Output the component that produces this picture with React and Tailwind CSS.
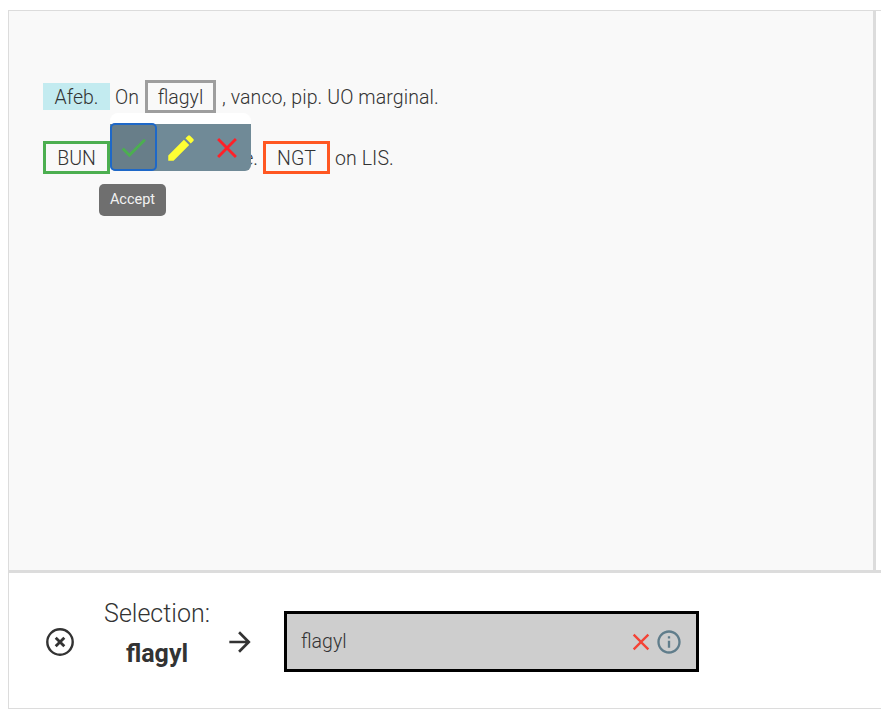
import { MdCheck, MdEdit, MdClose, MdArrowForward, MdInfoOutline } from 'react-icons/md';

function ClearIcon() {
  return (
    <svg width="28" height="28" viewBox="0 0 28 28" fill="none" stroke="#333" className="mt-px shrink-0">
      <circle cx="14" cy="14" r="12.7" strokeWidth="2.4" />
      <path d="M9.7 9.7l8.6 8.6M18.3 9.7l-8.6 8.6" strokeWidth="2.8" />
    </svg>
  );
}

function AnnotationToolbar() {
  return (
    <div className="absolute left-[67px] top-[-28px] z-10 h-[58px] w-[141px] rounded-lg bg-white pt-[11px]">
      <div className="flex h-[47px] rounded-b-md bg-[#708a97]">
        <button className="-mt-px flex h-12 w-[47px] items-center justify-center rounded-[5px] border-2 border-[#1e68c8] bg-[#687e89]">
          <MdCheck size={33} color="#4caf50" className="shrink-0" />
        </button>
        <button className="flex w-[47px] items-center justify-center">
          <MdEdit size={34} color="#ffff33" />
        </button>
        <button className="flex w-[46px] items-center justify-center">
          <MdClose size={34} color="#ff2028" />
        </button>
      </div>
      <div className="absolute left-[-11px] top-[71px] flex h-8 w-[67px] items-center justify-center rounded-[5px] bg-[#6f6f6f] text-[14.5px] font-normal text-[#f2f2f2]">
        Accept
      </div>
    </div>
  );
}

export default function App() {
  return (
    <div className="h-[714px] w-[881px] overflow-hidden bg-white pl-2 pt-[10px] font-[Roboto,sans-serif] font-light text-[#333]">
      <div className="flex h-[699px] flex-col border-y border-l border-[#dcdcdc]">
        <div className="flex h-[562px] border-b-[3px] border-[#dcdcdc]">
          <div className="w-[867px] border-r-[3px] border-[#dcdcdc] bg-[#f9f9f9] pl-[34px] pt-[69px] text-[19.5px]">
            <div className="flex h-[33px] items-center whitespace-pre leading-7">
              <span className="flex h-[27px] w-[67px] items-center justify-center bg-[#c3ebf0] pt-[3px]">Afeb.</span>
              <span className="w-[35px] pl-[5px] pt-0.5">On</span>
              <span className="flex h-[33px] w-[71px] items-center justify-center border-[3px] border-[#9e9e9e] pt-0.5">flagyl</span>
              <span className="pl-[6px] pt-0.5 tracking-[0.1px]">, vanco, pip. UO marginal.</span>
            </div>
            <div className="relative mt-7 flex h-[33px] items-center whitespace-pre leading-7">
              <span className="flex h-[33px] w-[67px] items-center justify-center border-[3px] border-[#4caf50] pt-0.5">BUN</span>
              <span className="w-[153px] pr-[5px] pt-0.5 text-right">e.</span>
              <span className="flex h-[33px] w-[67px] items-center justify-center border-[3px] border-[#ff5722] pt-0.5">NGT</span>
              <span className="pl-[5px] pt-0.5 tracking-[0.1px]">on LIS.</span>
              <AnnotationToolbar />
            </div>
          </div>
        </div>
        <div className="flex flex-1 items-center pl-[37px] pt-px">
          <ClearIcon />
          <div className="mb-[14px] ml-[27px] w-[112px] text-center text-[25px] leading-10">
            <div>Selection:</div>
            <div className="font-bold">flagyl</div>
          </div>
          <MdArrowForward size={32} className="ml-[11px] mt-px" />
          <div className="ml-[28px] flex h-[61px] w-[415px] items-center border-[3px] border-black bg-[#cecece] pl-[14px] pr-[13px] text-[19.5px]">
            <span className="flex-1 pt-0.5">flagyl</span>
            <MdClose size={28} color="#f44336" className="mt-px" />
            <MdInfoOutline size={28} color="#607d8b" className="mt-px" />
          </div>
        </div>
      </div>
    </div>
  );
}
